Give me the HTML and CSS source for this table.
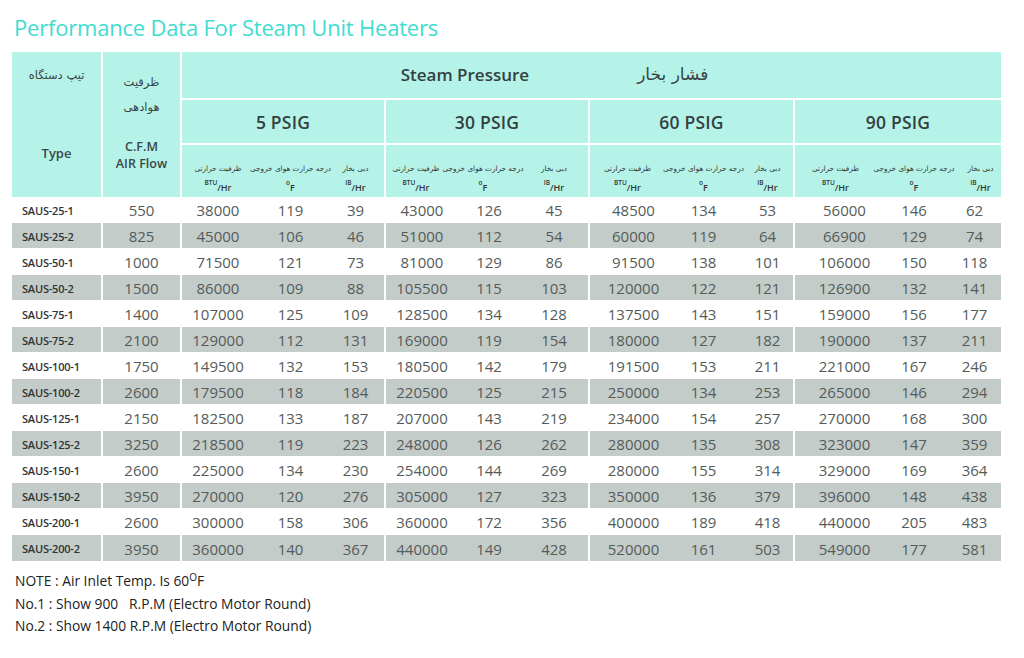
FILE: index.html
```html
<!DOCTYPE html>
<html lang="en">
<head>
<meta charset="utf-8">
<title>Performance Data For Steam Unit Heaters</title>
<link rel="stylesheet" href="styles.css">
</head>
<body>
<main class="page">
<h1 class="title">Performance Data For Steam Unit Heaters</h1>
<table class="perf">
<colgroup>
<col class="c-type"><col class="c-cfm">
<col class="c5a"><col class="c5b"><col class="c5c">
<col class="c30a"><col class="c30b"><col class="c30c">
<col class="c60a"><col class="c60b"><col class="c60c">
<col class="c90a"><col class="c90b"><col class="c90c">
</colgroup>
<thead>
<tr class="h1">
<th rowspan="3" class="type-h g"><div class="stack type-stack"><span class="fa">تیپ  دستگاه</span><span class="en-h">Type</span></div></th>
<th rowspan="3" class="cfm-h g"><div class="stack cfm-stack"><span class="fa fa-cfm">ظرفیت</span><span class="fa fa-cfm">هوادهی</span><span class="en-h cfm-en">C.F.M<br>AIR Flow</span></div></th>
<th colspan="12" class="sp"><div class="sp-in"><span class="sp-en">Steam Pressure</span><span class="sp-fa">فشار بخار</span></div></th>
</tr>
<tr class="h2">
<th colspan="3" class="psig g">5 PSIG</th>
<th colspan="3" class="psig g">30 PSIG</th>
<th colspan="3" class="psig g">60 PSIG</th>
<th colspan="3" class="psig">90 PSIG</th>
</tr>
<tr class="h3">
<th class="sub"><span class="fa-s">ظرفیت حرارتی</span><span class="unit"><span class="up">BTU</span><span class="dn">/Hr</span></span></th>
<th class="sub"><span class="fa-s">درجه حرارت هوای خروجی</span><span class="unit"><span class="up">o</span><span class="dn">F</span></span></th>
<th class="sub g"><span class="fa-s">دبی بخار</span><span class="unit"><span class="up">IB</span><span class="dn">/Hr</span></span></th>
<th class="sub s30a"><span class="fa-s">ظرفیت حرارتی</span><span class="unit"><span class="up">BTU</span><span class="dn">/Hr</span></span></th>
<th class="sub s30b"><span class="fa-s">درجه حرارت هوای خروجی</span><span class="unit"><span class="up">o</span><span class="dn">F</span></span></th>
<th class="sub g"><span class="fa-s">دبی بخار</span><span class="unit"><span class="up">IB</span><span class="dn">/Hr</span></span></th>
<th class="sub"><span class="fa-s">ظرفیت حرارتی</span><span class="unit"><span class="up">BTU</span><span class="dn">/Hr</span></span></th>
<th class="sub"><span class="fa-s">درجه حرارت هوای خروجی</span><span class="unit"><span class="up">o</span><span class="dn">F</span></span></th>
<th class="sub g"><span class="fa-s">دبی بخار</span><span class="unit"><span class="up">IB</span><span class="dn">/Hr</span></span></th>
<th class="sub s90a"><span class="fa-s">ظرفیت حرارتی</span><span class="unit"><span class="up">BTU</span><span class="dn">/Hr</span></span></th>
<th class="sub"><span class="fa-s">درجه حرارت هوای خروجی</span><span class="unit"><span class="up">o</span><span class="dn">F</span></span></th>
<th class="sub last"><span class="fa-s">دبی بخار</span><span class="unit"><span class="up">IB</span><span class="dn">/Hr</span></span></th>
</tr>
</thead>
<tbody>
<tr><td class="t g">SAUS-25-1</td><td class="g">550</td><td>38000</td><td>119</td><td class="g">39</td><td>43000</td><td>126</td><td class="g">45</td><td class="a60">48500</td><td>134</td><td class="g">53</td><td class="a90">56000</td><td>146</td><td>62</td></tr>
<tr class="alt"><td class="t g">SAUS-25-2</td><td class="g">825</td><td>45000</td><td>106</td><td class="g">46</td><td>51000</td><td>112</td><td class="g">54</td><td class="a60">60000</td><td>119</td><td class="g">64</td><td class="a90">66900</td><td>129</td><td>74</td></tr>
<tr><td class="t g">SAUS-50-1</td><td class="g">1000</td><td>71500</td><td>121</td><td class="g">73</td><td>81000</td><td>129</td><td class="g">86</td><td class="a60">91500</td><td>138</td><td class="g">101</td><td class="a90">106000</td><td>150</td><td>118</td></tr>
<tr class="alt"><td class="t g">SAUS-50-2</td><td class="g">1500</td><td>86000</td><td>109</td><td class="g">88</td><td>105500</td><td>115</td><td class="g">103</td><td class="a60">120000</td><td>122</td><td class="g">121</td><td class="a90">126900</td><td>132</td><td>141</td></tr>
<tr><td class="t g">SAUS-75-1</td><td class="g">1400</td><td>107000</td><td>125</td><td class="g">109</td><td>128500</td><td>134</td><td class="g">128</td><td class="a60">137500</td><td>143</td><td class="g">151</td><td class="a90">159000</td><td>156</td><td>177</td></tr>
<tr class="alt"><td class="t g">SAUS-75-2</td><td class="g">2100</td><td>129000</td><td>112</td><td class="g">131</td><td>169000</td><td>119</td><td class="g">154</td><td class="a60">180000</td><td>127</td><td class="g">182</td><td class="a90">190000</td><td>137</td><td>211</td></tr>
<tr><td class="t g">SAUS-100-1</td><td class="g">1750</td><td>149500</td><td>132</td><td class="g">153</td><td>180500</td><td>142</td><td class="g">179</td><td class="a60">191500</td><td>153</td><td class="g">211</td><td class="a90">221000</td><td>167</td><td>246</td></tr>
<tr class="alt"><td class="t g">SAUS-100-2</td><td class="g">2600</td><td>179500</td><td>118</td><td class="g">184</td><td>220500</td><td>125</td><td class="g">215</td><td class="a60">250000</td><td>134</td><td class="g">253</td><td class="a90">265000</td><td>146</td><td>294</td></tr>
<tr><td class="t g">SAUS-125-1</td><td class="g">2150</td><td>182500</td><td>133</td><td class="g">187</td><td>207000</td><td>143</td><td class="g">219</td><td class="a60">234000</td><td>154</td><td class="g">257</td><td class="a90">270000</td><td>168</td><td>300</td></tr>
<tr class="alt"><td class="t g">SAUS-125-2</td><td class="g">3250</td><td>218500</td><td>119</td><td class="g">223</td><td>248000</td><td>126</td><td class="g">262</td><td class="a60">280000</td><td>135</td><td class="g">308</td><td class="a90">323000</td><td>147</td><td>359</td></tr>
<tr><td class="t g">SAUS-150-1</td><td class="g">2600</td><td>225000</td><td>134</td><td class="g">230</td><td>254000</td><td>144</td><td class="g">269</td><td class="a60">280000</td><td>155</td><td class="g">314</td><td class="a90">329000</td><td>169</td><td>364</td></tr>
<tr class="alt"><td class="t g">SAUS-150-2</td><td class="g">3950</td><td>270000</td><td>120</td><td class="g">276</td><td>305000</td><td>127</td><td class="g">323</td><td class="a60">350000</td><td>136</td><td class="g">379</td><td class="a90">396000</td><td>148</td><td>438</td></tr>
<tr><td class="t g">SAUS-200-1</td><td class="g">2600</td><td>300000</td><td>158</td><td class="g">306</td><td>360000</td><td>172</td><td class="g">356</td><td class="a60">400000</td><td>189</td><td class="g">418</td><td class="a90">440000</td><td>205</td><td>483</td></tr>
<tr class="alt"><td class="t g">SAUS-200-2</td><td class="g">3950</td><td>360000</td><td>140</td><td class="g">367</td><td>440000</td><td>149</td><td class="g">428</td><td class="a60">520000</td><td>161</td><td class="g">503</td><td class="a90">549000</td><td>177</td><td>581</td></tr>
</tbody>
</table>
<div class="notes">
<p>NOTE : Air Inlet Temp. Is 60<sup class="deg">O</sup>F</p>
<p>No.1 : Show 900 &nbsp; R.P.M (Electro Motor Round)</p>
<p>No.2 : Show 1400 R.P.M (Electro Motor Round)</p>
</div>
</main>
</body>
</html>
```

FILE: styles.css
```css
* { box-sizing: border-box; }
html, body { margin: 0; padding: 0; background: #ffffff; }
body { font-family: "Open Sans", "DejaVu Sans", sans-serif; color: #333; }

.page { width: 1024px; height: 658px; padding: 12px 0 0 12px; overflow: hidden; }

.title {
  margin: 0 0 10px 2px;
  font-weight: 400;
  font-size: 22px;
  line-height: 30px;
  color: #3fdcd0;
  letter-spacing: -0.2px;
}

.perf {
  border-collapse: separate;
  border-spacing: 0;
  table-layout: fixed;
  width: 989px;
}
.c-type { width: 91px; }
.c-cfm { width: 79px; }
.c5a { width: 72px; } .c5b { width: 73px; } .c5c { width: 59px; }
.c30a { width: 72px; } .c30b { width: 62px; } .c30c { width: 70px; }
.c60a { width: 75px; } .c60b { width: 77px; } .c60c { width: 53px; }
.c90a { width: 85px; } .c90b { width: 68px; } .c90c { width: 53px; }

.perf th, .perf td { padding: 0; }
.perf thead th {
  background: #b5f3e9;
  color: #34403f;
  font-weight: 600;
  vertical-align: middle;
}
.perf .g { border-right: 2px solid #fff; }

.h1 { height: 48px; }
.h2 { height: 45px; }
.h3 { height: 52px; }

.type-h, .cfm-h { vertical-align: top !important; }
.stack { display: flex; flex-direction: column; align-items: center; }
.fa { font-family: "DejaVu Sans", sans-serif; font-weight: 400; font-size: 11.5px; color: #3c4544; direction: rtl; }
.type-stack { padding-top: 16px; }
.type-stack .en-h { margin-top: 63px; }
.en-h { font-size: 13px; font-weight: 600; color: #3b4645; line-height: 17px; }
.cfm-stack { padding-top: 18px; }
.fa-cfm { line-height: 25px; }
.cfm-en { margin-top: 18px; font-size: 12.5px; }

.sp { border-bottom: 2px solid #fff; }
.sp-in { display: flex; justify-content: center; align-items: center; gap: 108px; padding-right: 74px; padding-bottom: 2px; }
.sp-en { font-size: 17px; font-weight: 600; color: #34403f; }
.sp-fa { font-family: "DejaVu Sans", sans-serif; font-size: 17px; font-weight: 400; color: #3a4443; direction: rtl; }

.psig { border-bottom: 2px solid #fff; font-size: 17.5px; letter-spacing: 0.2px; }

.sub { vertical-align: bottom !important; padding-bottom: 4px !important; }
.sub > span { display: flex; justify-content: center; align-items: baseline; white-space: nowrap; }
.s30a { padding-right: 12px !important; }
.s30b { padding-right: 12px !important; }
.s90a { padding-right: 4px !important; }
.last { padding-left: 12px !important; }
.fa-s { font-family: "DejaVu Sans", sans-serif; font-size: 7.3px; font-weight: 400; color: #333; line-height: 12px; }
.unit { font-size: 8px; font-weight: 600; color: #333; line-height: 14px; margin-top: 3px; }
.unit .up { font-size: 6.5px; position: relative; top: -3px; }
.unit .dn { font-size: 9px; position: relative; top: 3px; }

.perf tbody tr { height: 26px; }
.perf tbody td {
  border-bottom: 1px solid #fff;
  text-align: center;
  font-size: 15px;
  color: #555b5a;
  vertical-align: middle;
  padding-top: 1px;
}
.perf tbody tr.alt td { background: #c4ccc9; }
.perf tbody tr:last-child td { border-bottom: 0; }
.perf tbody td.t {
  text-align: left;
  padding-left: 10px;
  font-size: 11px;
  font-weight: 600;
  color: #2f3434;
  letter-spacing: -0.2px;
}
.perf tbody td.a60 { padding-left: 12px; }
.perf tbody td.a90 { padding-left: 14px; }

.notes { margin-top: 9px; padding-left: 3px; }
.notes p { margin: 0; font-size: 13.8px; line-height: 22.5px; color: #222; }
.deg { font-size: 10px; vertical-align: 5px; line-height: 0; }
```
